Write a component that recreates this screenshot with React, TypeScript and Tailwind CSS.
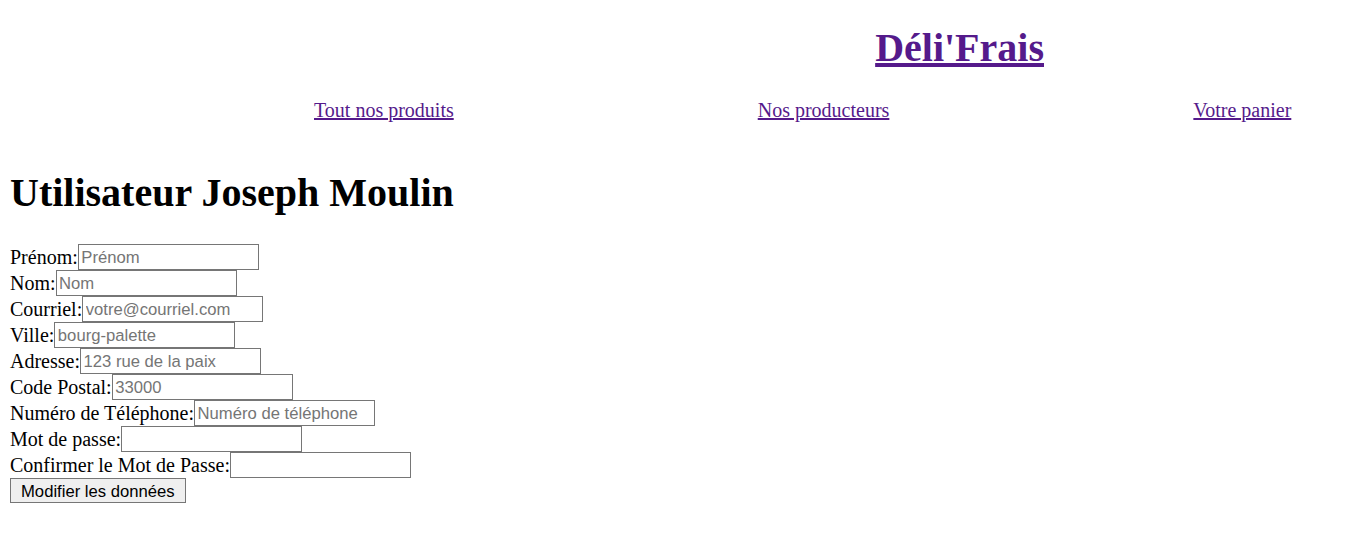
import React from "react";

const fields = [
  { label: "Prénom:", placeholder: "Prénom", type: "text" },
  { label: "Nom:", placeholder: "Nom", type: "text" },
  { label: "Courriel:", placeholder: "votre@courriel.com", type: "email" },
  { label: "Ville:", placeholder: "bourg-palette", type: "text" },
  { label: "Adresse:", placeholder: "123 rue de la paix", type: "text" },
  { label: "Code Postal:", placeholder: "33000", type: "text" },
  { label: "Numéro de Téléphone:", placeholder: "Numéro de téléphone", type: "tel" },
  { label: "Mot de passe:", placeholder: "", type: "password" },
  { label: "Confirmer le Mot de Passe:", placeholder: "", type: "password" },
];

function App() {
  return (
    <div className="min-h-[546px] bg-white text-black font-['Liberation_Serif','Times_New_Roman',serif] text-[20px] leading-[23px]">
      <header className="pt-[25px]">
        <div className="flex justify-end pr-[307px]">
          <a href="#" className="text-[40px] leading-[46px] font-bold text-[#551a8b] underline">
            Déli'Frais
          </a>
        </div>
        <nav className="flex gap-[304px] pl-[314px] mt-[28px]">
          <a href="#" className="text-[#551a8b] underline">Tout nos produits</a>
          <a href="#" className="text-[#551a8b] underline">Nos producteurs</a>
          <a href="#" className="text-[#551a8b] underline">Votre panier</a>
        </nav>
      </header>

      <main className="px-[10px]">
        <h1 className="text-[40px] leading-[46px] font-bold mt-[48px] mb-[28px]">
          Utilisateur Joseph Moulin
        </h1>
        <form className="flex flex-col items-start">
          {fields.map((f) => (
            <div key={f.label} className="flex items-center h-[26px]">
              <label>{f.label}</label>
              <input
                type={f.type}
                placeholder={f.placeholder}
                className="w-[181px] h-[26px] border border-[#767676] bg-white pl-[2.5px] pt-[2px] font-['Liberation_Sans',Arial,sans-serif] text-[16.67px] placeholder:text-[#757575] outline-none"
              />
            </div>
          ))}
          <button
            type="button"
            className="h-[25px] px-[10px] pt-[4px] border border-[#767676] bg-[#efefef] font-['Liberation_Sans',Arial,sans-serif] text-[16.67px] leading-none text-black"
          >
            Modifier les données
          </button>
        </form>
      </main>
    </div>
  );
}

export default App;
